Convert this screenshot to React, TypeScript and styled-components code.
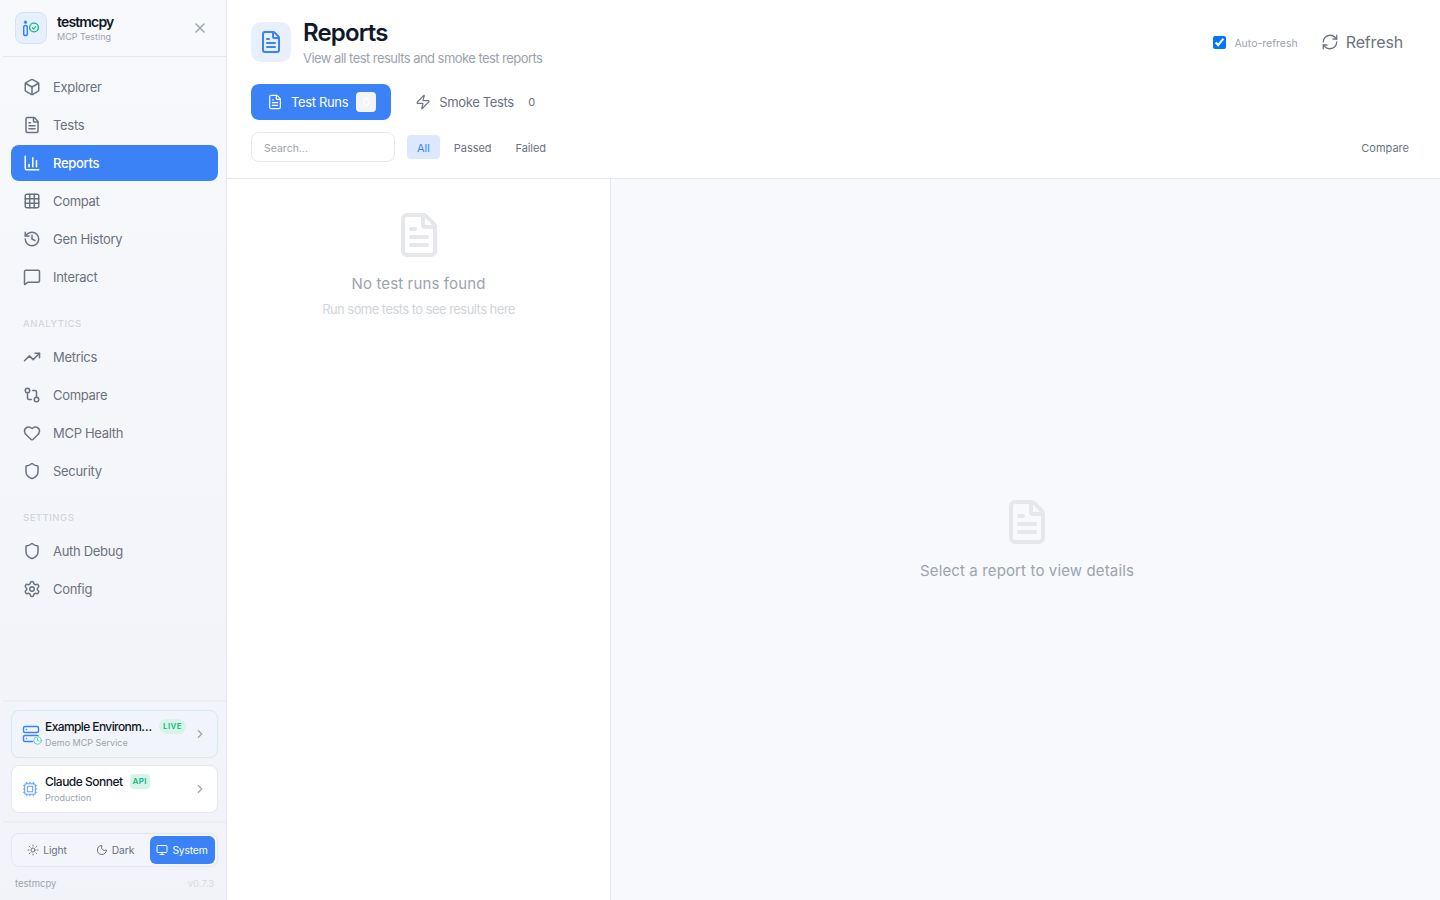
import styled, { createGlobalStyle } from 'styled-components'
import {
  BarChart3,
  Box,
  ChevronRight,
  Clock,
  Cpu,
  FileText,
  GitCompare,
  Grid3x3,
  Heart,
  History,
  MessageSquare,
  Monitor,
  Moon,
  RefreshCw,
  Server,
  Settings,
  Shield,
  Sun,
  TrendingUp,
  X,
  Zap,
} from 'lucide-react'

const GlobalStyle = createGlobalStyle`
  html, body {
    margin: 0;
    height: 100%;
  }
  body {
    font-family: Inter, "Liberation Sans", sans-serif;
    background: #fff;
    overflow: hidden;
  }
  * {
    box-sizing: border-box;
  }
`

const Page = styled.div`
  display: flex;
  width: 100%;
  height: 900px;
`
const Sidebar = styled.aside`
  display: flex;
  flex-direction: column;
  width: 227px;
  flex-shrink: 0;
  padding-left: 3px;
  background: linear-gradient(180deg, #f8f9fd 0%, #f2f3f8 100%);
  border-right: 1px solid #e5e7ef;
`
const Brand = styled.div`
  display: flex;
  align-items: center;
  height: 57px;
  padding: 0 18px 0 12px;
  border-bottom: 1px solid #e5e7ef;
`
const LogoBox = styled.div`
  display: flex;
  align-items: center;
  justify-content: center;
  width: 32px;
  height: 32px;
  margin-right: 10px;
  border-radius: 8px;
  background: #e6effd;
  border: 1px solid #d3e2fb;
`
const BrandText = styled.div`
  flex: 1;
`
const BrandName = styled.div`
  font-size: 14px;
  line-height: 18px;
  font-weight: 600;
  letter-spacing: -0.85px;
  color: #111827;
`
const BrandSub = styled.div`
  font-size: 9px;
  line-height: 12px;
  color: #9ca3af;
`
const Nav = styled.nav`
  flex: 1;
  padding: 12px 8px 0;
`
const NavItem = styled.div<{ $active?: boolean }>`
  display: flex;
  align-items: center;
  gap: 12px;
  height: 36px;
  margin-bottom: 2px;
  padding-left: 12px;
  border-radius: 8px;
  font-size: 13px;
  letter-spacing: -0.3px;
  font-weight: ${(p) => (p.$active ? 500 : 400)};
  color: ${(p) => (p.$active ? '#fff' : '#6b7280')};
  background: ${(p) => (p.$active ? '#3b82f6' : 'transparent')};
`
const SectionLabel = styled.div`
  height: 42px;
  padding: 15px 0 0 12px;
  font-size: 9.5px;
  line-height: 24px;
  font-weight: 500;
  letter-spacing: 0.5px;
  text-transform: uppercase;
  color: #d1d5db;
`
const Cards = styled.div`
  display: flex;
  flex-direction: column;
  gap: 7px;
  padding: 8px;
  border-top: 2px solid #eceef4;
  border-bottom: 2px solid #eceef4;
`
const ServiceCard = styled.div<{ $live?: boolean }>`
  display: flex;
  align-items: center;
  height: 48px;
  padding: 0 10px;
  border-radius: 8px;
  background: ${(p) => (p.$live ? '#f1f5fb' : '#fff')};
  border: 1px solid ${(p) => (p.$live ? '#d5ebe6' : '#e5e7ef')};
`
const CardIcon = styled.div<{ $strong?: boolean }>`
  position: relative;
  display: flex;
  width: 23px;
  color: ${(p) => (p.$strong ? '#3b82f6' : '#60a5fa')};
`
const CardBody = styled.div`
  flex: 1;
  min-width: 0;
`
const CardTitle = styled.div`
  display: flex;
  align-items: center;
  gap: 7px;
  font-size: 12px;
  line-height: 16px;
  font-weight: 500;
  letter-spacing: -0.5px;
  color: #111827;
`
const Truncated = styled.span`
  display: block;
  max-width: 108px;
  margin-right: -1px;
  overflow: hidden;
  letter-spacing: -0.6px;
  white-space: nowrap;
  text-overflow: ellipsis;
`
const CardSub = styled.div`
  margin-top: 1px;
  font-size: 9px;
  line-height: 14px;
  color: #9ca3af;
`
const Tag = styled.span<{ $round?: boolean }>`
  padding: 0 ${(p) => (p.$round ? 4 : 3)}px;
  height: 15px;
  border-radius: ${(p) => (p.$round ? 8 : 4)}px;
  font-size: 8px;
  line-height: 15px;
  font-weight: 600;
  letter-spacing: 0.4px;
  color: #10b981;
  background: #d8f3ea;
`
const StatusClock = styled(Clock)`
  position: absolute;
  left: 11px;
  top: 11px;
  color: #34c79a;
  background: #f1f5fb;
  border-radius: 50%;
`
const Chevron = styled(ChevronRight)`
  flex-shrink: 0;
  color: #9ca3af;
`
const ThemeArea = styled.div`
  padding: 10px 8px 0;
  height: 77px;
`
const ThemeSwitch = styled.div`
  display: grid;
  grid-template-columns: 67px 69px 65px;
  height: 34px;
  padding: 2px;
  border-radius: 8px;
  background: #f4f5fa;
  border: 1px solid #e5e7ef;
`
const ThemeOption = styled.div<{ $active?: boolean }>`
  display: flex;
  align-items: center;
  justify-content: center;
  gap: 4px;
  padding-right: 1px;
  border-radius: 6px;
  font-size: 10.3px;
  letter-spacing: -0.15px;
  color: ${(p) => (p.$active ? '#fff' : '#6b7280')};
  background: ${(p) => (p.$active ? '#3b82f6' : 'transparent')};
`
const VersionRow = styled.div`
  display: flex;
  justify-content: space-between;
  padding: 10px 4px 0;
  font-size: 9.5px;
  line-height: 14px;
  color: #9ca3af;
`
const VersionNumber = styled.span`
  color: #d8dbe1;
`
const Main = styled.main`
  flex: 1;
  display: flex;
  flex-direction: column;
  min-width: 0;
`
const Header = styled.header`
  height: 179px;
  padding: 22px 31px 0 24px;
  border-bottom: 1px solid #e5e7ef;
`
const TitleRow = styled.div`
  display: flex;
  align-items: center;
  height: 40px;
  padding-right: 6px;
`
const TitleIcon = styled.div`
  display: flex;
  align-items: center;
  justify-content: center;
  width: 40px;
  height: 40px;
  margin-right: 12px;
  border-radius: 10px;
  color: #3b82f6;
  background: #e9f0fd;
`
const TitleText = styled.div`
  flex: 1;
  align-self: flex-start;
`
const Title = styled.h1`
  margin: -3px 0 0;
  font-size: 24px;
  line-height: 28px;
  font-weight: 600;
  letter-spacing: -0.85px;
  color: #111827;
`
const Subtitle = styled.p`
  margin: 1px 0 0;
  font-size: 13px;
  line-height: 20px;
  letter-spacing: -0.55px;
  color: #9ca3af;
`
const AutoRefresh = styled.label`
  display: flex;
  align-items: center;
  gap: 8px;
  margin-right: 23px;
  font-size: 10.5px;
  color: #9ca3af;
`
const AutoRefreshText = styled.span`
  margin-top: 2px;
`
const Check = styled.input`
  width: 13px;
  height: 13px;
  margin: 0;
`
const RefreshButton = styled.div`
  display: flex;
  align-items: center;
  gap: 7px;
  font-size: 16px;
  letter-spacing: -0.15px;
  color: #6b7280;
`
const Tabs = styled.div`
  display: flex;
  gap: 8px;
  margin-top: 22px;
`
const Tab = styled.div<{ $active?: boolean }>`
  display: flex;
  align-items: center;
  gap: 8px;
  height: 36px;
  padding: 0 15px 0 16px;
  border-radius: 8px;
  font-size: 13px;
  letter-spacing: -0.35px;
  color: ${(p) => (p.$active ? '#fff' : '#6b7280')};
  background: ${(p) => (p.$active ? '#3b82f6' : 'transparent')};
`
const TabCount = styled.span<{ $active?: boolean }>`
  display: flex;
  align-items: center;
  justify-content: center;
  width: 20px;
  height: 20px;
  border-radius: 4px;
  font-size: 11px;
  letter-spacing: 0;
  color: ${(p) => (p.$active ? '#fff' : '#6b7280')};
  background: ${(p) => (p.$active ? '#f3f4f6' : 'transparent')};
`
const FilterRow = styled.div`
  display: flex;
  align-items: center;
  margin-top: 12px;
  height: 30px;
`
const Search = styled.input`
  width: 144px;
  height: 30px;
  margin-right: 12px;
  padding: 2px 12px 0;
  border: 1px solid #e5e7ef;
  border-radius: 8px;
  outline: none;
  font-family: inherit;
  font-size: 10.5px;
  &::placeholder {
    color: #9ca3af;
  }
`
const Filter = styled.div<{ $active?: boolean }>`
  display: flex;
  align-items: center;
  height: 24px;
  padding: 1px 10px 0;
  margin-right: 4px;
  border-radius: 4px;
  font-size: 11px;
  letter-spacing: -0.05px;
  color: ${(p) => (p.$active ? '#3b82f6' : '#6b7280')};
  background: ${(p) => (p.$active ? '#dbe8fe' : 'transparent')};
`
const CompareLink = styled.div`
  margin-left: auto;
  padding-top: 1px;
  font-size: 11px;
  color: #6b7280;
`
const Split = styled.div`
  flex: 1;
  display: flex;
  min-height: 0;
`
const ListPane = styled.section`
  width: 384px;
  padding-top: 32px;
  border-right: 1px solid #e5e7ef;
  text-align: center;
`
const EmptyIcon = styled(FileText)`
  display: block;
  margin: 0 auto;
  color: #e5e7eb;
`
const EmptyTitle = styled.div`
  margin-top: 13px;
  font-size: 15px;
  line-height: 24px;
  letter-spacing: 0.13px;
  color: #9ca3af;
`
const EmptyHint = styled.div`
  margin-top: 3px;
  font-size: 13px;
  line-height: 20px;
  letter-spacing: -0.55px;
  color: #d1d5db;
`
const DetailPane = styled.section`
  flex: 1;
  display: flex;
  flex-direction: column;
  align-items: center;
  padding: 319px 0 0 3px;
  background: #f8f9fd;
`
const DetailText = styled.div`
  margin-top: 13px;
  font-size: 15px;
  line-height: 24px;
  letter-spacing: 0.13px;
  color: #9ca3af;
`

const ICON = { size: 18, strokeWidth: 2 }

const primaryNav = [
  { label: 'Explorer', icon: Box },
  { label: 'Tests', icon: FileText },
  { label: 'Reports', icon: BarChart3, active: true },
  { label: 'Compat', icon: Grid3x3 },
  { label: 'Gen History', icon: History },
  { label: 'Interact', icon: MessageSquare },
]
const analyticsNav = [
  { label: 'Metrics', icon: TrendingUp },
  { label: 'Compare', icon: GitCompare },
  { label: 'MCP Health', icon: Heart },
  { label: 'Security', icon: Shield },
]
const settingsNav = [
  { label: 'Auth Debug', icon: Shield },
  { label: 'Config', icon: Settings },
]

function NavGroup({ items }: { items: typeof primaryNav }) {
  return (
    <>
      {items.map(({ label, icon: Icon, active }) => (
        <NavItem key={label} $active={active}>
          <Icon {...ICON} />
          {label}
        </NavItem>
      ))}
    </>
  )
}

function Logo() {
  return (
    <svg width='18' height='18' viewBox='0 0 18 18' fill='none'>
      <rect x='1.7' y='6.5' width='3.6' height='10' rx='1.8' stroke='#3b82f6' strokeWidth='1.5' />
      <circle cx='3.5' cy='3.2' r='1.6' fill='#3b82f6' />
      <circle cx='12' cy='8.5' r='4.4' stroke='#10b981' strokeWidth='1.4' />
      <path d='M10.2 8.5l1.4 1.4 2.2-2.6' stroke='#10b981' strokeWidth='1.2' />
    </svg>
  )
}

export default function App() {
  return (
    <Page>
      <GlobalStyle />
      <Sidebar>
        <Brand>
          <LogoBox>
            <Logo />
          </LogoBox>
          <BrandText>
            <BrandName>testmcpy</BrandName>
            <BrandSub>MCP Testing</BrandSub>
          </BrandText>
          <X size={16} color='#9ca3af' />
        </Brand>
        <Nav>
          <NavGroup items={primaryNav} />
          <SectionLabel>Analytics</SectionLabel>
          <NavGroup items={analyticsNav} />
          <SectionLabel>Settings</SectionLabel>
          <NavGroup items={settingsNav} />
        </Nav>
        <Cards>
          <ServiceCard $live>
            <CardIcon $strong>
              <Server size={18} strokeWidth={1.9} />
              <StatusClock size={9} strokeWidth={2} />
            </CardIcon>
            <CardBody>
              <CardTitle>
                <Truncated>Example Environment</Truncated>
                <Tag $round>LIVE</Tag>
              </CardTitle>
              <CardSub>Demo MCP Service</CardSub>
            </CardBody>
            <Chevron size={14} />
          </ServiceCard>
          <ServiceCard>
            <CardIcon>
              <Cpu size={16} strokeWidth={1.6} />
            </CardIcon>
            <CardBody>
              <CardTitle>
                Claude Sonnet
                <Tag>API</Tag>
              </CardTitle>
              <CardSub>Production</CardSub>
            </CardBody>
            <Chevron size={14} />
          </ServiceCard>
        </Cards>
        <ThemeArea>
          <ThemeSwitch>
            <ThemeOption>
              <Sun size={12} />
              Light
            </ThemeOption>
            <ThemeOption>
              <Moon size={12} />
              Dark
            </ThemeOption>
            <ThemeOption $active>
              <Monitor size={12} />
              System
            </ThemeOption>
          </ThemeSwitch>
          <VersionRow>
            <span>testmcpy</span>
            <VersionNumber>v0.7.3</VersionNumber>
          </VersionRow>
        </ThemeArea>
      </Sidebar>
      <Main>
        <Header>
          <TitleRow>
            <TitleIcon>
              <FileText size={24} strokeWidth={2} />
            </TitleIcon>
            <TitleText>
              <Title>Reports</Title>
              <Subtitle>View all test results and smoke test reports</Subtitle>
            </TitleText>
            <AutoRefresh>
              <Check type='checkbox' defaultChecked />
              <AutoRefreshText>Auto-refresh</AutoRefreshText>
            </AutoRefresh>
            <RefreshButton>
              <RefreshCw size={18} strokeWidth={1.7} />
              Refresh
            </RefreshButton>
          </TitleRow>
          <Tabs>
            <Tab $active>
              <FileText size={16} strokeWidth={1.7} />
              Test Runs
              <TabCount $active>0</TabCount>
            </Tab>
            <Tab>
              <Zap size={16} strokeWidth={1.7} />
              Smoke Tests
              <TabCount>0</TabCount>
            </Tab>
          </Tabs>
          <FilterRow>
            <Search placeholder='Search...' />
            <Filter $active>All</Filter>
            <Filter>Passed</Filter>
            <Filter>Failed</Filter>
            <CompareLink>Compare</CompareLink>
          </FilterRow>
        </Header>
        <Split>
          <ListPane>
            <EmptyIcon size={48} strokeWidth={2} />
            <EmptyTitle>No test runs found</EmptyTitle>
            <EmptyHint>Run some tests to see results here</EmptyHint>
          </ListPane>
          <DetailPane>
            <EmptyIcon size={48} strokeWidth={2} />
            <DetailText>Select a report to view details</DetailText>
          </DetailPane>
        </Split>
      </Main>
    </Page>
  )
}
